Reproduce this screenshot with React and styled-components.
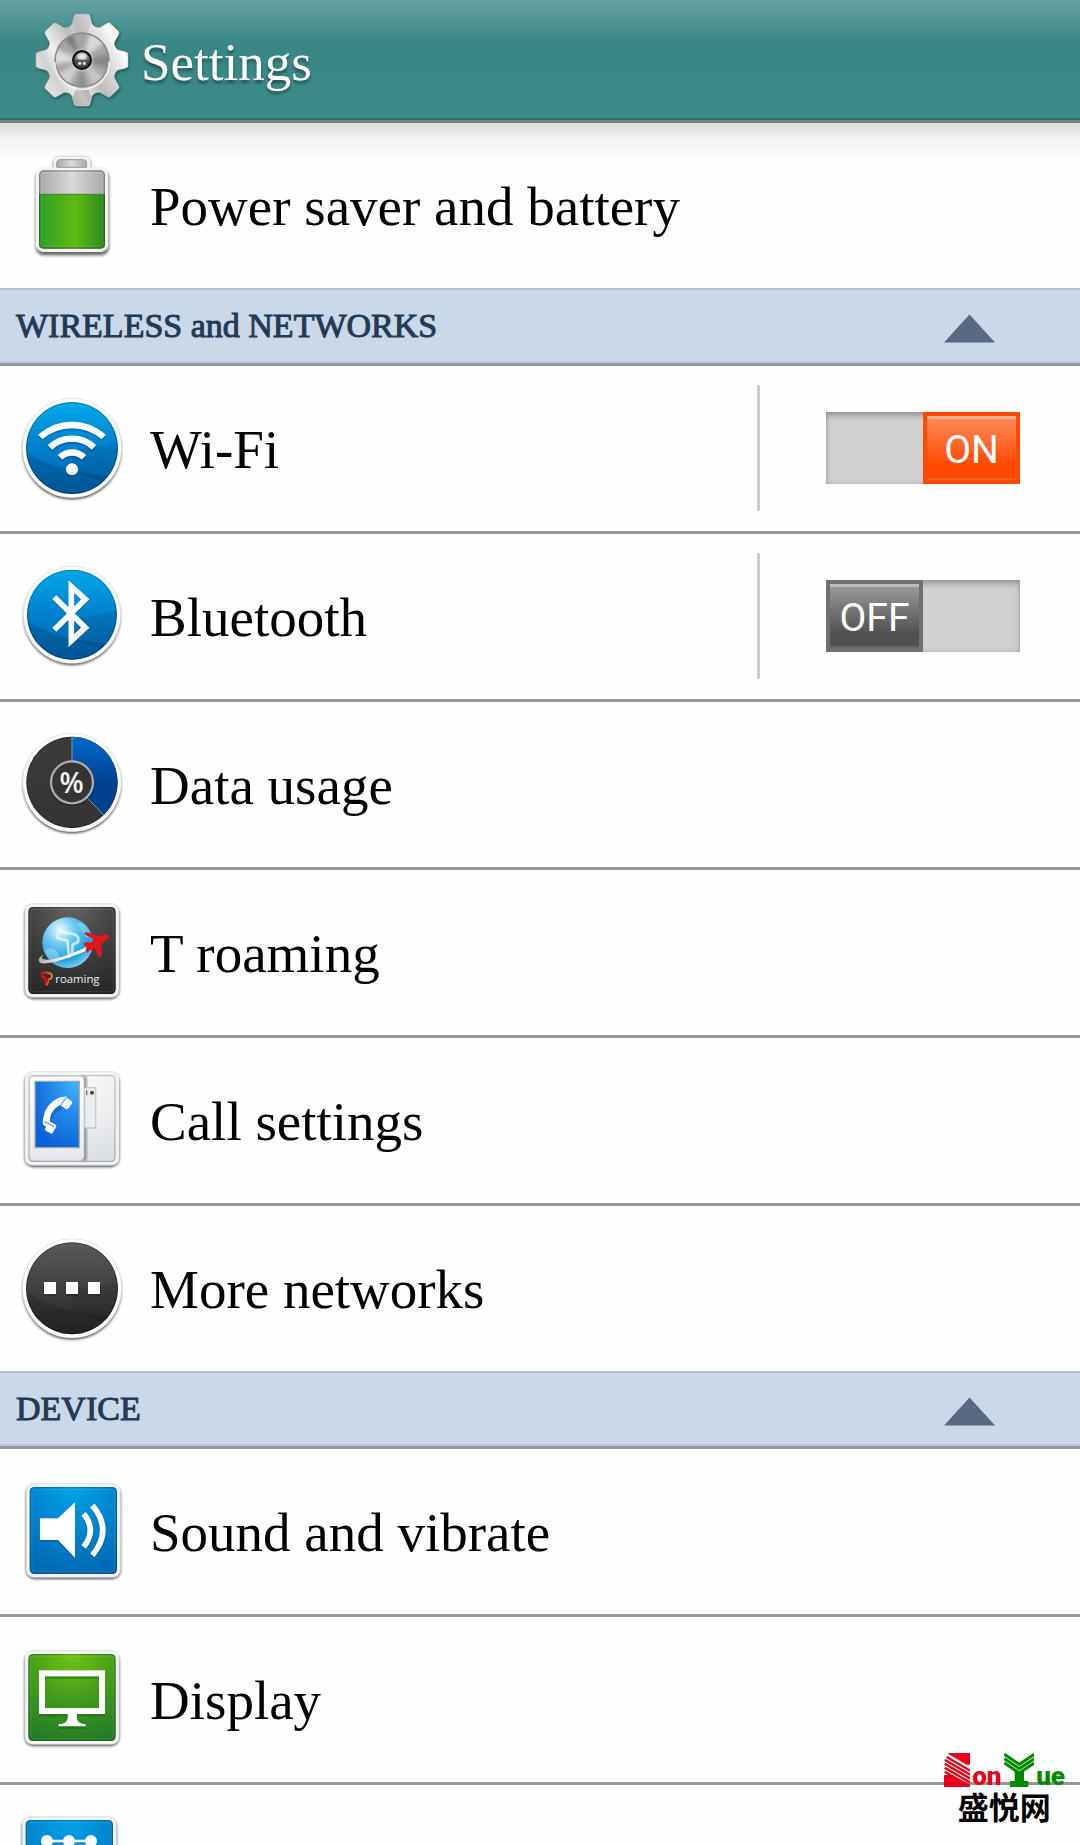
import React, { useState } from 'react';
import styled, { createGlobalStyle } from 'styled-components';

const App = () => {
  const [open, setOpen] = useState({ wireless: true, device: true });
  const [enabled, setEnabled] = useState({ wifi: true, bluetooth: false });

  const toggleSection = (id) => setOpen({ ...open, [id]: !open[id] });
  const toggleItem = (id) => setEnabled({ ...enabled, [id]: !enabled[id] });

  return (
    <Screen>
      <GlobalStyle />
      <Header>
        <GearIcon />
        <Title>Settings</Title>
      </Header>
      <Content>
        <List>
          <Row>
            <RowButton type="button">
              <BatteryIcon />
              <RowLabel>Power saver and battery</RowLabel>
            </RowButton>
          </Row>
        </List>
        {sections.map((section) => (
          <section key={section.id}>
            <SectionTitle>
              <SectionButton
                type="button"
                aria-expanded={open[section.id]}
                onClick={() => toggleSection(section.id)}
              >
                <SectionLabel>{section.title}</SectionLabel>
                <Arrow viewBox="0 0 51 29" $open={open[section.id]} aria-hidden="true">
                  <path d="M25.500 0.500L51 28.500H0Z" fill="#596a80" />
                </Arrow>
              </SectionButton>
            </SectionTitle>
            {open[section.id] && (
              <List>
                {section.items.map(({ id, label, name, Icon, hasSwitch }) => (
                  <Row key={id}>
                    <RowButton type="button" aria-label={name}>
                      <Icon />
                      {label && <RowLabel>{label}</RowLabel>}
                    </RowButton>
                    {hasSwitch && (
                      <SwitchCell>
                        <SwitchTrack $on={enabled[id]}>
                          <SwitchInput
                            type="checkbox"
                            role="switch"
                            aria-label={label}
                            checked={enabled[id]}
                            onChange={() => toggleItem(id)}
                          />
                          <SwitchThumb $on={enabled[id]}>{enabled[id] ? 'ON' : 'OFF'}</SwitchThumb>
                        </SwitchTrack>
                      </SwitchCell>
                    )}
                  </Row>
                ))}
              </List>
            )}
          </section>
        ))}
      </Content>
      <Watermark>
        <WatermarkName>
          <StripedS />
          <WatermarkText $color="#ea0018">on</WatermarkText>
          <StripedY />
          <WatermarkText $color="#008a00">ue</WatermarkText>
        </WatermarkName>
        <WatermarkChinese lang="zh">盛悦网</WatermarkChinese>
      </Watermark>
    </Screen>
  );
};

/* ---------- icons ---------- */

// All row icons are drawn on a 360 x 375 grid.
const RowSvg = ({ children }) => (
  <RowIcon viewBox="0 0 360 375" aria-hidden="true">
    {children}
  </RowIcon>
);

const Blur = ({ id, size }) => (
  <filter id={id} x="-20%" y="-20%" width="140%" height="140%">
    <feGaussianBlur stdDeviation={size} />
  </filter>
);

const RoundBadge = ({ id, cy, r, colors, gloss, children }) => (
  <RowSvg>
    <defs>
      <linearGradient id={`${id}-fill`} x1="0" y1="0" x2="0" y2="1">
        <stop offset="0" stopColor={colors[0]} />
        <stop offset="0.5" stopColor={colors[1]} />
        <stop offset="1" stopColor={colors[2]} />
      </linearGradient>
      <clipPath id={`${id}-clip`}>
        <circle cx="180" cy={cy} r={r} />
      </clipPath>
      <Blur id={`${id}-blur`} size="4" />
    </defs>
    <circle cx="180" cy={cy + 6} r={r + 9} fill="#000" opacity="0.85" filter={`url(#${id}-blur)`} />
    <circle cx="180" cy={cy} r={r + 11} fill="#fff" stroke="#dcdcdc" strokeWidth="2" />
    <circle cx="180" cy={cy} r={r} fill={`url(#${id}-fill)`} />
    {gloss && (
      <g clipPath={`url(#${id}-clip)`}>
        <path d="M30 190Q100 240 200 258T340 268V360H30Z" fill="#000" opacity="0.13" />
        <path d="M180 190Q260 188 330 165V300Q250 285 180 255Z" fill="#000" opacity="0.09" />
      </g>
    )}
    <circle cx="180" cy={cy} r={r - 2} fill="none" stroke="#000" strokeWidth="3" opacity="0.22" />
    {children}
  </RowSvg>
);

const SquareBadge = ({ id, x = 49, y = 51, colors, children }) => (
  <RowSvg>
    <defs>
      <radialGradient id={`${id}-fill`} cx="0.5" cy="0" r="1.05">
        <stop offset="0" stopColor={colors[0]} />
        <stop offset="0.5" stopColor={colors[1]} />
        <stop offset="1" stopColor={colors[2]} />
      </radialGradient>
      <Blur id={`${id}-blur`} size="4" />
    </defs>
    <rect x={x - 10} y={y - 4} width="282" height="279" rx="24" fill="#000" opacity="0.8" filter={`url(#${id}-blur)`} />
    <rect x={x - 10} y={y - 10} width="282" height="281" rx="22" fill="#f3f3f3" stroke="#d9d9d9" strokeWidth="2" />
    <rect x={x} y={y} width="262" height="261" rx="14" fill={`url(#${id}-fill)`} />
    <rect x={x + 2} y={y + 2} width="258" height="257" rx="12" fill="none" stroke="#000" strokeWidth="4" opacity="0.2" />
    <rect x={x + 7} y={y + 7} width="248" height="247" rx="8" fill="none" stroke="#fff" strokeWidth="2" opacity="0.15" />
    {children}
  </RowSvg>
);

const BLUE = ['#00a8ea', '#0080cd', '#0061ab'];
const DARK = ['#5a5a58', '#3f3f3e', '#262626'];

const GearIcon = () => (
  <HeaderIcon viewBox="0 0 288 288" aria-hidden="true">
    <defs>
      <linearGradient id="gear-body" x1="0" y1="0.8" x2="1" y2="0.2">
        <stop offset="0" stopColor="#eeeeee" />
        <stop offset="0.2" stopColor="#d2d2d2" />
        <stop offset="0.32" stopColor="#f1f1f1" />
        <stop offset="0.52" stopColor="#bdbdbd" />
        <stop offset="0.72" stopColor="#dedede" />
        <stop offset="0.86" stopColor="#fafafa" />
        <stop offset="1" stopColor="#c8c8c8" />
      </linearGradient>
      <radialGradient id="gear-ball" cx="0.5" cy="0.25" r="0.7">
        <stop offset="0" stopColor="#e0e0e0" />
        <stop offset="0.5" stopColor="#8a8a8a" />
        <stop offset="1" stopColor="#333" />
      </radialGradient>
      <clipPath id="gear-disc">
        <circle cx="144" cy="144" r="78" />
      </clipPath>
      <Blur id="gear-blur" size="4" />
      <Blur id="gear-soft" size="6" />
    </defs>
    <path d={gearPath} fill="#0d3a39" opacity="0.7" transform="translate(3 4)" filter="url(#gear-blur)" />
    <path d={gearPath} fill="url(#gear-body)" stroke="#777" strokeWidth="2" strokeOpacity="0.6" />
    <path d="M116 32L124 6H164L172 32L160 62H128Z" fill="#777" opacity="0.18" />
    <path d="M116 256L124 281H164L172 256L160 226H128Z" fill="#555" opacity="0.3" />
    <circle cx="144" cy="144" r="83" fill="#8b8b8b" />
    <path d="M62 150A82 82 0 0 0 226 150" fill="none" stroke="#eee" strokeWidth="5" />
    <circle cx="144" cy="144" r="78" fill="#a5a5a5" />
    <g clipPath="url(#gear-disc)">
      <g filter="url(#gear-soft)">
        <path d="M144 144L20 94V164Z" fill="#ddd" />
        <path d="M144 144L50 24L94 20Z" fill="#777" />
        <path d="M144 144L180 20L240 70Z" fill="#d8d8d8" />
        <path d="M144 144L260 120V180Z" fill="#868686" />
        <path d="M144 144L240 220L190 260Z" fill="#c6c6c6" />
        <path d="M144 144L160 270H124Z" fill="#8a8a8a" />
        <path d="M144 144L30 210L86 260Z" fill="#cfcfcf" />
      </g>
    </g>
    <circle cx="144" cy="144" r="35" fill="#ccc" opacity="0.5" />
    <circle cx="144" cy="144" r="30" fill="#101010" />
    <circle cx="144" cy="145" r="24" fill="url(#gear-ball)" />
    <ellipse cx="144" cy="134" rx="14" ry="9" fill="#fff" opacity="0.55" />
    <path d="M121 143H167L164 154Q144 162 124 154Z" fill="#333" opacity="0.6" />
    <circle cx="137" cy="154" r="5" fill="#ddd" />
    <circle cx="151" cy="154" r="5" fill="#ddd" />
  </HeaderIcon>
);

// One tooth is described in polar form (angle, radius) and repeated every 45 degrees.
const gearPath = (() => {
  const tooth = [[-16, 112], [-11.5, 130], [-9.500, 138], [-7.500, 140], [7.500, 140], [9.500, 138], [11.5, 130], [16, 112], [20, 108], [25, 108]];
  const points = [];
  for (let i = 0; i < 8; i += 1) {
    tooth.forEach(([angle, radius]) => {
      const a = ((angle + i * 45 - 90) * Math.PI) / 180;
      points.push(`${(144 + radius * Math.cos(a)).toFixed(1)} ${(144 + radius * Math.sin(a)).toFixed(1)}`);
    });
  }
  return `M${points.join('L')}Z`;
})();

const BatteryIcon = () => (
  <RowSvg>
    <defs>
      <linearGradient id="battery-green">
        <stop offset="0" stopColor="#2f9e27" />
        <stop offset="0.55" stopColor="#5fba12" />
        <stop offset="1" stopColor="#2a8a1e" />
      </linearGradient>
      <linearGradient id="battery-grey">
        <stop offset="0" stopColor="#a9a9a9" />
        <stop offset="0.5" stopColor="#d9d9d9" />
        <stop offset="1" stopColor="#a9a9a9" />
      </linearGradient>
      <Blur id="battery-blur" size="4" />
    </defs>
    <g opacity="0.6" filter="url(#battery-blur)">
      <rect x="124" y="44" width="112" height="60" rx="18" />
      <rect x="71" y="80" width="220" height="257" rx="24" />
    </g>
    <rect x="124" y="40" width="112" height="70" rx="16" fill="#f3f3f3" stroke="#d5d5d5" strokeWidth="2" />
    <rect x="71" y="73" width="218" height="254" rx="22" fill="#f3f3f3" />
    <path d="M134 73V60Q134 50 144 50H214Q224 50 224 60V73Z" fill="url(#battery-grey)" stroke="#999" strokeWidth="3" />
    <rect x="81" y="82" width="198" height="235" rx="14" fill="url(#battery-grey)" />
    <path d="M81 154H279V303Q279 317 265 317H95Q81 317 81 303Z" fill="url(#battery-green)" />
    <path d="M81 154H279" stroke="#3f8a20" strokeWidth="3" />
    <rect x="83" y="84" width="194" height="231" rx="12" fill="none" stroke="#000" strokeWidth="4" opacity="0.25" />
    <rect x="88" y="89" width="184" height="221" rx="8" fill="none" stroke="#fff" strokeWidth="2" opacity="0.18" />
  </RowSvg>
);

const WifiIcon = () => (
  <RoundBadge id="wifi" cy={186} r={138} colors={BLUE} gloss>
    {[{ stroke: '#003c78', opacity: 0.35, dy: 7 }, { stroke: '#fff', opacity: 1, dy: 1 }].map(({ stroke, opacity, dy }) => (
      <g key={dy} transform={`translate(0 ${dy})`} opacity={opacity}>
        <g fill="none" stroke={stroke} strokeWidth="19">
          <path d="M85 152A143 143 0 0 1 275 152" />
          <path d="M114 183A97 97 0 0 1 246 183" />
          <path d="M144 213A52 52 0 0 1 216 213" />
        </g>
        <circle cx="180" cy="249" r="18" fill={stroke} />
      </g>
    ))}
  </RoundBadge>
);

const BluetoothIcon = () => (
  <RoundBadge id="bluetooth" cy={182} r={135} colors={BLUE} gloss>
    <g fill="none" strokeWidth="17" strokeMiterlimit="8">
      <path d="M128 136L222 222L178 264V108L222 138L128 232" stroke="#003c78" opacity="0.3" />
      <path d="M127 130L220 221L178 260V98L220 136L127 227" stroke="#fff" />
    </g>
  </RoundBadge>
);

const DataUsageIcon = () => (
  <RoundBadge id="data" cy={181} r={137} colors={['#3b3b3b', '#383838', '#333333']}>
    <defs>
      <linearGradient id="data-slice" x1="0" y1="0" x2="0" y2="1">
        <stop offset="0" stopColor="#006bcb" />
        <stop offset="0.6" stopColor="#00408d" />
        <stop offset="1" stopColor="#00428f" />
      </linearGradient>
    </defs>
    <path d="M180 181V44A137 137 0 0 1 275 279Z" fill="url(#data-slice)" />
    <path d="M180 44V181L275 279" fill="none" stroke="#7f9c9c" strokeWidth="3" />
    <circle cx="180" cy="185" r="68" fill="#000" opacity="0.3" />
    <circle cx="180" cy="181" r="63" fill="#343434" stroke="#a9abad" strokeWidth="7" />
    <text x="179" y="213" fontSize="84" fontWeight="600" fontFamily='"Open Sans", sans-serif' textAnchor="middle" fill="#f4f4f4">%</text>
  </RoundBadge>
);

const RoamingIcon = () => (
  <SquareBadge id="roaming" colors={['#646463', '#40403f', '#272727']}>
    <defs>
      <radialGradient id="roaming-globe" cx="0.35" cy="0.25" r="0.8">
        <stop offset="0" stopColor="#f2fbff" />
        <stop offset="0.35" stopColor="#6fcbf3" />
        <stop offset="0.75" stopColor="#229fd9" />
        <stop offset="1" stopColor="#7fd3f4" />
      </radialGradient>
      <linearGradient id="roaming-trail">
        <stop offset="0" stopColor="#aaa" />
        <stop offset="0.5" stopColor="#fff" />
        <stop offset="1" stopColor="#eee" />
      </linearGradient>
      <linearGradient id="roaming-mark">
        <stop offset="0" stopColor="#e60012" />
        <stop offset="0.5" stopColor="#ee3d12" />
        <stop offset="1" stopColor="#f59a13" />
      </linearGradient>
    </defs>
    <circle cx="167" cy="158" r="76" fill="url(#roaming-globe)" />
    <path d="M195 100Q215 96 228 115L238 140Q220 150 214 130ZM96 180Q125 165 138 190T128 218Q105 208 96 180Z" fill="#d6f3ff" opacity="0.35" />
    <path d="M172 204L166 152L137 144Q134 128 150 126L184 132Q204 138 198 156L182 164L180 198" fill="none" stroke="#f3fbff" strokeWidth="8" strokeLinejoin="round" opacity="0.7" />
    <path d="M95 193Q72 208 84 218Q110 230 234 178L230 168Q130 216 94 208Q85 204 95 193Z" fill="url(#roaming-trail)" />
    <path d="M292 135L288 146L267 163L270 198L260 203L249 174L232 182L226 189L220 181L224 172L213 161L222 156L236 158L246 148L216 132L222 126L262 138L278 133Z" fill="#e2141c" />
    <path d="M88 250Q102 243 118 252Q124 266 110 268L106 284H102L97 264L90 260Z" fill="none" stroke="url(#roaming-mark)" strokeWidth="5" strokeLinejoin="round" />
    <path d="M86 250L94 262L101 284L106 264Z" fill="#e60012" />
    <text x="130" y="278" fontSize="34" fontFamily='"Open Sans", sans-serif' fill="#f1f1f1">roaming</text>
  </SquareBadge>
);

const CallIcon = () => (
  <SquareBadge id="call" colors={['#fbfbfb', '#eff0f2', '#d9dde1']}>
    <defs>
      <radialGradient id="call-screen" cx="0.9" cy="0" r="1.1">
        <stop offset="0" stopColor="#3fb4fc" />
        <stop offset="0.45" stopColor="#2489e8" />
        <stop offset="1" stopColor="#0a62d8" />
      </radialGradient>
      <linearGradient id="call-body" x1="0" y1="0" x2="0" y2="1">
        <stop offset="0" stopColor="#fff" />
        <stop offset="1" stopColor="#e6e9ed" />
      </linearGradient>
      <Blur id="call-soft" size="4" />
    </defs>
    <rect x="206" y="56" width="18" height="252" fill="#666" opacity="0.7" filter="url(#call-soft)" />
    <rect x="218" y="89" width="33" height="121" rx="4" fill="#ebecee" stroke="#c6c8ca" strokeWidth="4" />
    <circle cx="240" cy="104" r="6" fill="#444" />
    <path d="M224 97V112" stroke="#777" strokeWidth="4" />
    <rect x="53" y="55" width="163" height="252" rx="12" fill="url(#call-body)" stroke="#c2c4c6" strokeWidth="2" />
    <rect x="69" y="70" width="133" height="199" fill="url(#call-screen)" stroke="#a7abb0" strokeWidth="4" />
    <g fill="#063f94" opacity="0.35" transform="translate(0 7)">
      <path d="M152 117Q95 130 92 196L105 208Q114 164 150 146Z" />
    </g>
    <g fill="#fff">
      <path d="M166 116Q148 114 132 124Q94 146 92 196Q93 204 104 207L114 190Q112 162 142 142L152 146Z" />
      <rect x="151" y="122" width="26" height="29" rx="5" transform="rotate(36 164 136)" />
      <rect x="103" y="194" width="26" height="30" rx="5" transform="rotate(30 116 209)" />
    </g>
    <path d="M144 145L164 117M97 190L126 206" stroke="#2a82e4" strokeWidth="3" />
  </SquareBadge>
);

const MoreIcon = () => (
  <RoundBadge id="more" cy={187} r={138} colors={DARK} gloss>
    {[96, 162, 228].map((x) => (
      <g key={x}>
        <rect x={x} y="174" width="36" height="36" fill="#000" opacity="0.2" />
        <rect x={x} y="168" width="36" height="36" fill="#fff" />
      </g>
    ))}
  </RoundBadge>
);

const SoundIcon = () => (
  <SquareBadge id="sound" x={53} y={54} colors={['#00a4e6', '#0083cf', '#0068b0']}>
    {[{ color: '#003c78', opacity: 0.3, dy: 6 }, { color: '#fff', opacity: 1, dy: 0 }].map(({ color, opacity, dy }) => (
      <g key={dy} transform={`translate(0 ${dy})`} opacity={opacity}>
        <path d="M84 148H138L189 100V267L138 213H84Z" fill={color} />
        <path d="M215 134Q255 184 215 234M241 109Q304 184 241 259" fill="none" stroke={color} strokeWidth="17" />
      </g>
    ))}
  </SquareBadge>
);

const DisplayIcon = () => (
  <SquareBadge id="display" colors={['#72c413', '#419c1b', '#237a28']}>
    {[{ color: '#0b4d10', opacity: 0.35, dy: 8 }, { color: '#fff', opacity: 1, dy: 0 }].map(({ color, opacity, dy }) => (
      <g key={dy} transform={`translate(0 ${dy})`} opacity={opacity}>
        <rect x="90" y="109" width="180" height="113" fill="none" stroke={color} strokeWidth="18" />
        <path d="M167 228H195V246Q198 260 221 262V268H140V262Q164 260 167 246Z" fill={color} />
      </g>
    ))}
  </SquareBadge>
);

const PatternIcon = () => (
  <SquareBadge id="pattern" x={41} y={45} colors={['#00a4e6', '#0083cf', '#0068b0']}>
    <path d="M105 108H237L105 240H237" fill="none" stroke="#fff" strokeWidth="7" />
    {[108, 174, 240].map((y) => [105, 171, 237].map((x) => (
      <circle key={`${x}-${y}`} cx={x} cy={y} r="18" fill="#fff" />
    )))}
  </SquareBadge>
);

const StripedS = () => (
  <WatermarkGlyph viewBox="0 0 80 102" aria-hidden="true">
    <path d="M14 0H79V35H68L14 4ZM0 66H16L74 98V102H0Z" fill="#ea0018" />
    <path d="M8 12L79 53M3 21L79 65M2 32L79 77M2 44L79 89M2 56L79 100" stroke="#ea0018" strokeWidth="7" />
  </WatermarkGlyph>
);

const StripedY = () => (
  <WatermarkGlyph viewBox="0 0 92 102" aria-hidden="true">
    <path d="M32 54L46 62L60 54V84H73V102H18V84H32Z" fill="#008a00" />
    <path d="M1 4L46 34L91 4M1 17L46 47L91 17M1 30L46 60L91 30" fill="none" stroke="#008a00" strokeWidth="9" />
  </WatermarkGlyph>
);

const sections = [
  {
    id: 'wireless',
    title: 'WIRELESS and NETWORKS',
    items: [
      { id: 'wifi', label: 'Wi-Fi', Icon: WifiIcon, hasSwitch: true },
      { id: 'bluetooth', label: 'Bluetooth', Icon: BluetoothIcon, hasSwitch: true },
      { id: 'data', label: 'Data usage', Icon: DataUsageIcon },
      { id: 'roaming', label: 'T roaming', Icon: RoamingIcon },
      { id: 'call', label: 'Call settings', Icon: CallIcon },
      { id: 'more', label: 'More networks', Icon: MoreIcon }
    ]
  },
  {
    id: 'device',
    title: 'DEVICE',
    items: [
      { id: 'sound', label: 'Sound and vibrate', Icon: SoundIcon },
      { id: 'display', label: 'Display', Icon: DisplayIcon },
      { id: 'lock', name: 'Lock screen', Icon: PatternIcon }
    ]
  }
];

/* ---------- styles ---------- */

const GlobalStyle = createGlobalStyle`
  * {
    box-sizing: border-box;
  }

  body {
    margin: 0;
    background-color: #fefefe;
    font-family: 'Liberation Serif', serif;
  }

  button {
    border: 0;
    background: none;
    font: inherit;
    color: inherit;
    text-align: left;
    cursor: pointer;
  }
`;

const Screen = styled.div`
  position: relative;
  display: flex;
  flex-direction: column;
  height: 100vh;
  overflow: hidden;
`;

const Header = styled.header`
  flex: none;
  display: flex;
  align-items: center;
  gap: 11px;
  height: 123px;
  padding-left: 34px;
  background: linear-gradient(#63a3a1 0, #398785 44px, #3b8b89 100%);
  border-bottom: 3px solid #7c7c7c;
  box-shadow: inset 0 -2px 0 #32716f;
`;

const HeaderIcon = styled.svg`
  width: 96px;
  height: 96px;
`;

const Title = styled.h1`
  margin: 0;
  padding-top: 4px;
  font-size: 53px;
  font-weight: 400;
  line-height: 60px;
  color: #fff;
  text-shadow: 0 3px 3px rgba(0, 0, 0, 0.4);
`;

const Content = styled.main`
  flex: 1;
  min-height: 0;
  overflow: hidden;
  background: linear-gradient(#dcdcdc 0, #f3f3f3 16px, #fefefe 38px);
`;

const List = styled.ul`
  margin: 0;
  padding: 0;
  list-style: none;
`;

const Row = styled.li`
  display: flex;
  align-items: flex-start;

  & + & {
    border-top: 3px solid #969696;
  }
`;

const RowButton = styled.button`
  flex: 1;
  display: flex;
  align-items: center;
  gap: 18px;
  padding: 20px 12px;
`;

const RowIcon = styled.svg`
  flex: none;
  width: 120px;
  height: 125px;
`;

const RowLabel = styled.span`
  padding-top: 2px;
  font-size: 55px;
  line-height: 64px;
  color: #000;
`;

const SectionTitle = styled.h2`
  margin: 0;
  font-size: 34px;
  font-weight: 400;
  line-height: 40px;
  color: #233a55;
`;

const SectionButton = styled.button`
  display: flex;
  align-items: center;
  justify-content: space-between;
  width: 100%;
  height: 78px;
  padding: 5px 85px 0 16px;
  background-color: #cbd8e8;
  border-bottom: 3px solid #969696;
  box-shadow: inset 0 2px 0 #b3c0cf, inset 0 -2px 0 #bac7d6;
`;

const SectionLabel = styled.span`
  padding-bottom: 4px;
  -webkit-text-stroke: 1px currentColor;
`;

const Arrow = styled.svg`
  width: 51px;
  height: 29px;
  transform: ${(props) => (props.$open ? 'none' : 'rotate(180deg)')};
`;

const SwitchCell = styled.div`
  display: flex;
  align-items: center;
  height: 126px;
  margin-top: 19px;
  padding: 0 60px 0 66px;
  border-left: 3px solid #cacaca;
`;

const SwitchTrack = styled.label`
  position: relative;
  display: flex;
  justify-content: ${(props) => (props.$on ? 'flex-end' : 'flex-start')};
  width: 194px;
  height: 72px;
  background-color: #d0d0d0;
  box-shadow: inset 0 4px 6px -1px #8f9191, inset 0 0 4px #a9abab;
  cursor: pointer;
`;

const SwitchInput = styled.input`
  position: absolute;
  inset: 0;
  width: 100%;
  height: 100%;
  margin: 0;
  opacity: 0;
  cursor: pointer;
`;

const SwitchThumb = styled.span`
  display: flex;
  align-items: center;
  justify-content: center;
  width: 97px;
  padding-top: 4px;
  border: 4px solid ${(props) => (props.$on ? '#ff4800' : '#707070')};
  background: ${(props) =>
    props.$on ? 'linear-gradient(#ff8d5e, #ff4800 78%)' : 'linear-gradient(#9d9d9d, #505050 78%)'};
  box-shadow: inset 0 3px 0 rgba(255, 255, 255, 0.35), inset 0 -2px 0 rgba(255, 255, 255, 0.12);
  font-family: Roboto, sans-serif;
  font-size: 39px;
  font-weight: 400;
  line-height: 44px;
  color: #fff;
`;

const Watermark = styled.div`
  position: absolute;
  right: 15px;
  bottom: 22px;
  display: flex;
  flex-direction: column;
  align-items: center;
`;

const WatermarkName = styled.div`
  display: flex;
  align-items: flex-end;
  gap: 2px;
`;

const WatermarkGlyph = styled.svg`
  height: 34px;
`;

const WatermarkText = styled.span`
  font-family: Roboto, sans-serif;
  font-size: 26px;
  font-weight: 900;
  line-height: 22px;
  color: ${(props) => props.$color};
`;

const WatermarkChinese = styled.span`
  padding-top: 2px;
  font-family: 'Noto Sans CJK SC', sans-serif;
  font-size: 31px;
  font-weight: 700;
  line-height: 34px;
  color: #000;
`;

export default App;
